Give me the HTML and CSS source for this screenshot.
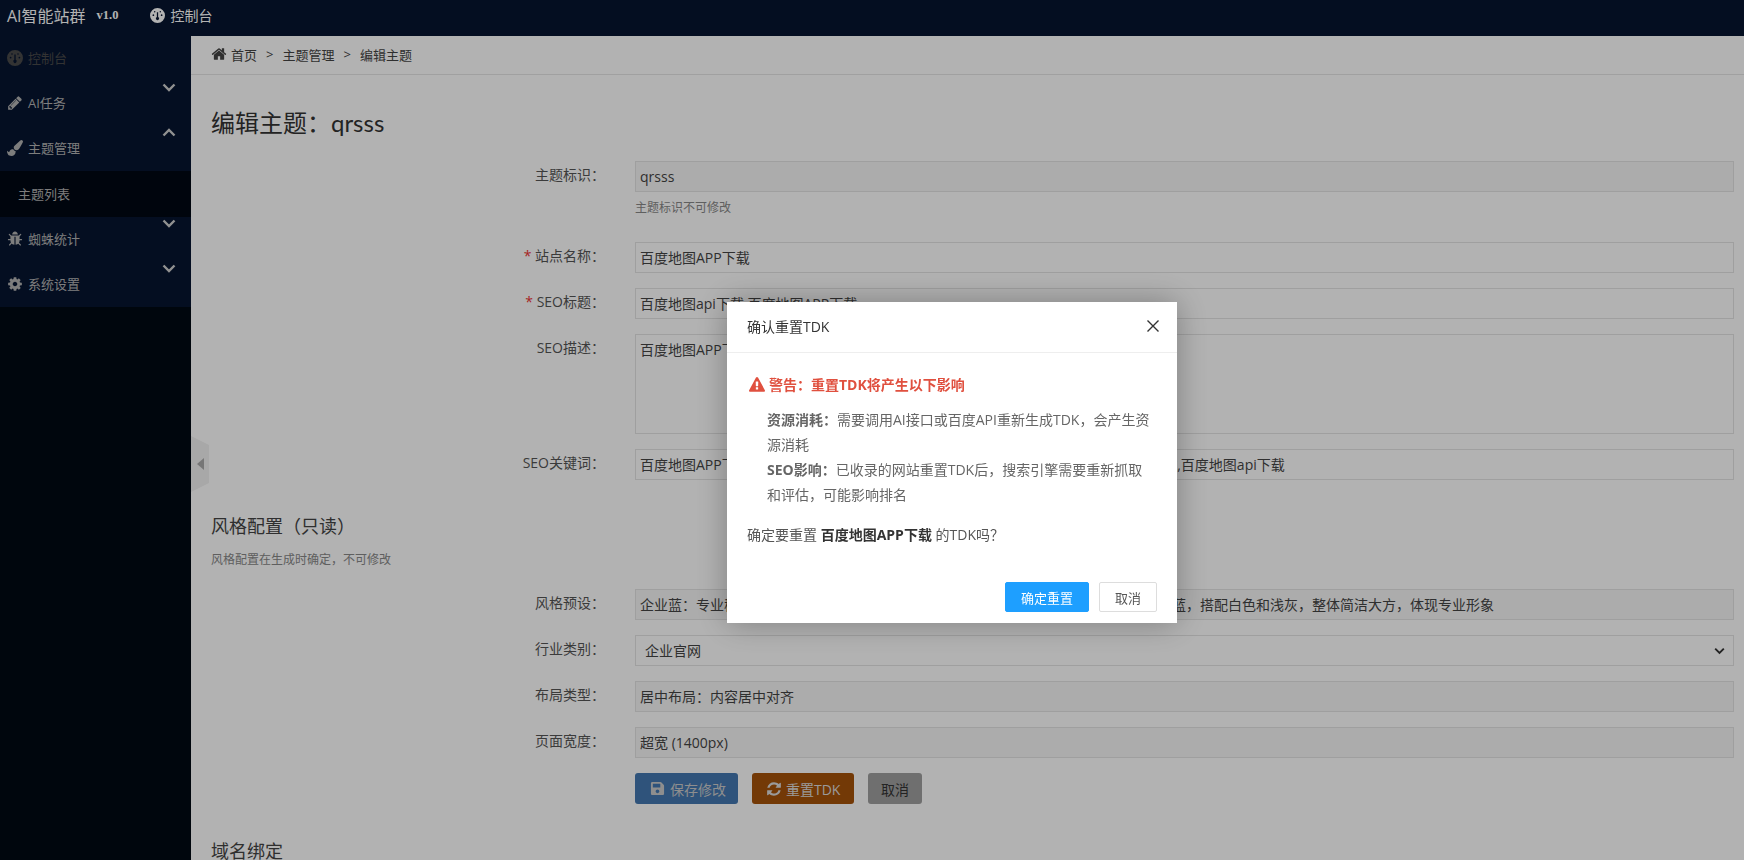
FILE: index.html
```html
<!DOCTYPE html>
<html lang="zh-CN">
<head>
<meta charset="utf-8">
<title>编辑主题</title>
<link rel="stylesheet" href="styles.css">
</head>
<body>
<svg class="sprite" aria-hidden="true">
  <defs>
    <symbol id="i-home" viewBox="0 0 1792 1792"><path d="M1472 992v480q0 26-19 45t-45 19h-384v-384h-256v384h-384q-26 0-45-19t-19-45v-480q0-1 .5-3t.5-3l575-474 575 474q1 2 1 6zm223-69l-62 74q-8 9-21 11h-3q-13 0-21-7l-692-577-692 577q-12 8-24 7-13-2-21-11l-62-74q-8-10-7-23.500t11-21.500l719-599q32-26 76-26t76 26l244 204v-195q0-14 9-23t23-9h192q14 0 23 9t9 23v408l219 182q10 8 11 21.500t-7 23.500z"/></symbol>
    <symbol id="i-pencil" viewBox="0 0 1792 1792"><path d="M491 1536l91-91-235-235-91 91v107h128v128h107zm523-928q0-22-22-22-10 0-17 7l-542 542q-7 7-7 17 0 22 22 22 10 0 17-7l542-542q7-7 7-17zm-54-192l416 416-832 832h-416v-416zm683 96q0 53-37 90l-166 166-416-416 166-165q36-38 90-38 53 0 91 38l235 234q37 39 37 91z"/></symbol>
    <symbol id="i-brush" viewBox="0 0 1792 1792"><path d="M1615 0q70 0 122.500 46.500t52.500 116.500q0 63-45 151-332 629-465 752-97 91-218 91-126 0-216.500-92.500t-90.500-219.500q0-128 92-212l638-579q59-54 130-54zm-909 1034q39 76 106.500 130t150.500 76l1 71q4 213-129.500 347t-348.500 134q-123 0-218-46.500t-152.500-127.500-86.500-183-29-220q7 5 41 30t62 44.500 59 36.500 46 17q41 0 55-37 25-66 57.500-112.500t69.500-76 88-47.500 103-25.500 125-10.500z"/></symbol>
    <symbol id="i-bug" viewBox="0 0 1792 1792"><path d="M1696 960q0 26-19 45t-45 19h-224q0 171-67 290l208 209q19 19 19 45t-19 45q-18 19-45 19t-45-19l-198-197q-5 5-15 13t-42 28.500-65 36.500-82 29-97 13v-896h-128v896q-51 0-101.500-13.500t-87-33-66-39-43.500-32.500l-15-14-183 207q-20 21-48 21-24 0-43-16-19-18-20.500-44.500t15.500-46.500l202-227q-58-114-58-274h-224q-26 0-45-19t-19-45 19-45 45-19h224v-294l-173-173q-19-19-19-45t19-45 45-19 45 19l173 173h844l173-173q19-19 45-19t45 19 19 45-19 45l-173 173v294h224q26 0 45 19t19 45zm-480-576h-640q0-133 93.500-226.500t226.500-93.500 226.500 93.500 93.500 226.500z"/></symbol>
    <symbol id="i-cog" viewBox="0 0 1792 1792"><path d="M1152 896q0-106-75-181t-181-75-181 75-75 181 75 181 181 75 181-75 75-181zm512-109v222q0 12-8 23t-20 13l-185 28q-19 54-39 91 35 50 107 138 10 12 10 25t-9 23q-27 37-99 108t-94 71q-12 0-26-9l-138-108q-44 23-91 38-16 136-29 186-7 28-36 28h-222q-14 0-24.500-8.500t-11.500-21.500l-28-184q-49-16-90-37l-141 107q-10 9-25 9-14 0-25-11-126-114-165-168-7-10-7-23 0-12 8-23 15-21 51-66.500t54-70.500q-27-50-41-99l-183-27q-13-2-21-12.500t-8-23.500v-222q0-12 8-23t19-13l186-28q14-46 39-92-40-57-107-138-10-12-10-24 0-10 9-23 26-36 98.500-107.500t94.500-71.500q13 0 26 10l138 107q44-23 91-38 16-136 29-186 7-28 36-28h222q14 0 24.500 8.500t11.500 21.500l28 184q49 16 90 37l142-107q9-9 24-9 13 0 25 10 129 119 165 170 7 8 7 22 0 12-8 23-15 21-51 66.500t-54 70.500q26 50 41 98l183 28q13 2 21 12.500t8 23.500z"/></symbol>
    <symbol id="i-save" viewBox="0 0 448 512"><path d="M433.941 129.941l-83.882-83.882A48 48 0 0 0 316.118 32H48C21.49 32 0 53.49 0 80v352c0 26.51 21.49 48 48 48h352c26.51 0 48-21.49 48-48V163.882a48 48 0 0 0-14.059-33.941zM224 416c-35.346 0-64-28.654-64-64 0-35.346 28.654-64 64-64s64 28.654 64 64c0 35.346-28.654 64-64 64zm96-304.520V212c0 6.627-5.373 12-12 12H76c-6.627 0-12-5.373-12-12V108c0-6.627 5.373-12 12-12h228.520c3.183 0 6.235 1.264 8.485 3.515l3.480 3.480A11.996 11.996 0 0 1 320 111.480z"/></symbol>
    <symbol id="i-refresh" viewBox="0 0 1792 1792"><path d="M1639 1056q0 5-1 7-64 268-268 434.500t-478 166.500q-146 0-282.500-55t-243.500-157l-129 129q-19 19-45 19t-45-19-19-45v-448q0-26 19-45t45-19h448q26 0 45 19t19 45-19 45l-137 137q71 66 161 102t187 36q134 0 250-65t186-179q11-17 53-117 8-23 30-23h192q13 0 22.500 9.500t9.500 22.500zm25-800v448q0 26-19 45t-45 19h-448q-26 0-45-19t-19-45 19-45l138-138q-148-137-349-137-134 0-250 65t-186 179q-11 17-53 117-8 23-30 23h-199q-13 0-22.500-9.500t-9.500-22.500v-7q65-268 270-434.500t480-166.500q146 0 284 55.500t245 156.500l130-129q19-19 45-19t45 19 19 45z"/></symbol>
    <symbol id="i-warn" viewBox="0 0 1792 1792"><path d="M1024 1375v-190q0-14-9.500-23.500t-22.500-9.500h-192q-13 0-22.500 9.500t-9.500 23.500v190q0 14 9.500 23.500t22.500 9.500h192q13 0 22.500-9.500t9.500-23.500zm-2-374l18-459q0-12-10-19-13-11-24-11h-220q-11 0-24 11-10 7-10 21l17 457q0 10 10 16.500t24 6.500h185q14 0 23.500-6.500t10.500-16.500zm-14-934l768 1408q35 63-2 126-17 29-46.500 46t-63.500 17h-1536q-34 0-63.500-17t-46.500-46q-37-63-2-126l768-1408q17-31 47-49t65-18 65 18 47 49z"/></symbol>
    <symbol id="i-gauge" viewBox="0 0 16 16"><path fill-rule="evenodd" d="M8 0a8 8 0 1 1 0 16A8 8 0 0 1 8 0zM7.300 4.500v5.200a1.700 1.700 0 1 0 1.400 0V4.500zM3.600 6.700a.9.900 0 1 0 0 1.800.9.900 0 0 0 0-1.800zM12.400 6.700a.9.900 0 1 0 0 1.800.9.900 0 0 0 0-1.800zM5 3.200a.8.800 0 1 0 0 1.600.8.800 0 0 0 0-1.600zM11 3.200a.8.800 0 1 0 0 1.600.8.800 0 0 0 0-1.600z"/></symbol>
    <symbol id="i-down" viewBox="0 0 14 9"><path d="M1.500 1.500L7 7l5.500-5.500" fill="none" stroke="currentColor" stroke-width="2.400"/></symbol>
    <symbol id="i-up" viewBox="0 0 14 9"><path d="M1.500 7.500L7 2l5.500 5.500" fill="none" stroke="currentColor" stroke-width="2.400"/></symbol>
  </defs>
</svg>

<header class="topbar">
  <span class="brand">AI智能站群</span>
  <span class="version">v1.0</span>
  <a class="top-link"><svg class="icon icon-top"><use href="#i-gauge"/></svg>控制台</a>
</header>

<div class="shell">
  <nav class="sidebar">
    <ul class="menu">
      <li class="menu-item is-muted"><svg class="icon"><use href="#i-gauge"/></svg>控制台</li>
      <li class="menu-item"><svg class="icon"><use href="#i-pencil"/></svg>AI任务<svg class="caret"><use href="#i-down"/></svg></li>
      <li class="menu-item"><svg class="icon"><use href="#i-brush"/></svg>主题管理<svg class="caret"><use href="#i-up"/></svg></li>
      <li class="menu-sub">主题列表</li>
      <li class="menu-item"><svg class="icon"><use href="#i-bug"/></svg>蜘蛛统计<svg class="caret"><use href="#i-down"/></svg></li>
      <li class="menu-item"><svg class="icon"><use href="#i-cog"/></svg>系统设置<svg class="caret"><use href="#i-down"/></svg></li>
    </ul>
  </nav>

  <main class="main">
    <div class="side-toggle"><span class="side-toggle-arrow"></span></div>
    <div class="crumbs">
      <svg class="icon icon-home"><use href="#i-home"/></svg>
      <span>首页</span><span class="sep">&gt;</span><span>主题管理</span><span class="sep">&gt;</span><span>编辑主题</span>
    </div>

    <div class="content">
      <h1 class="page-title">编辑主题：qrsss</h1>

      <div class="row row-hinted">
        <label class="label">主题标识：</label>
        <div class="control">
          <div class="field field-ro">qrsss</div>
          <div class="help">主题标识不可修改</div>
        </div>
      </div>
      <div class="row">
        <label class="label"><em class="req">*</em> 站点名称：</label>
        <div class="control"><div class="field">百度地图APP下载</div></div>
      </div>
      <div class="row">
        <label class="label"><em class="req">*</em> SEO标题：</label>
        <div class="control"><div class="field">百度地图api下载,百度地图APP下载</div></div>
      </div>
      <div class="row">
        <label class="label">SEO描述：</label>
        <div class="control"><div class="field field-area">百度地图APP下载</div></div>
      </div>
      <div class="row">
        <label class="label">SEO关键词：</label>
        <div class="control"><div class="field">百度地图APP下载,百度地图iPhone,百度地图下载, 百度地图手机下载,百度地图官方下载,百度地图api下载</div></div>
      </div>

      <h2 class="section-title">风格配置（只读）</h2>
      <p class="section-note">风格配置在生成时确定，不可修改</p>

      <div class="row">
        <label class="label">风格预设：</label>
        <div class="control"><div class="field field-ro">企业蓝：专业稳重的企业风格，适合企业官网与商务类站点使用，采用商务主色调为深蓝，搭配白色和浅灰，整体简洁大方，体现专业形象</div></div>
      </div>
      <div class="row">
        <label class="label">行业类别：</label>
        <div class="control"><div class="field field-select">企业官网<svg class="select-caret"><use href="#i-down"/></svg></div></div>
      </div>
      <div class="row">
        <label class="label">布局类型：</label>
        <div class="control"><div class="field field-ro">居中布局：内容居中对齐</div></div>
      </div>
      <div class="row">
        <label class="label">页面宽度：</label>
        <div class="control"><div class="field field-ro">超宽 (1400px)</div></div>
      </div>

      <div class="actions">
        <button class="btn btn-blue"><svg class="icon"><use href="#i-save"/></svg>保存修改</button>
        <button class="btn btn-orange"><svg class="icon icon-refresh"><use href="#i-refresh"/></svg>重置TDK</button>
        <button class="btn btn-grey">取消</button>
      </div>

      <h2 class="section-title section-domain">域名绑定</h2>
    </div>
  </main>
</div>

<div class="overlay"></div>
<section class="modal">
  <header class="modal-head">
    <span>确认重置TDK</span>
    <svg class="modal-close" viewBox="0 0 14 14"><path d="M1.500 1.500l11 11M12.500 1.500l-11 11" stroke="currentColor" stroke-width="1.400" fill="none"/></svg>
  </header>
  <div class="modal-body">
    <p class="warn"><svg class="icon icon-warn"><use href="#i-warn"/></svg>警告：重置TDK将产生以下影响</p>
    <div class="impact">
      <p><strong>资源消耗：</strong>需要调用AI接口或百度API重新生成TDK，会产生资源消耗</p>
      <p><strong>SEO影响：</strong>已收录的网站重置TDK后，搜索引擎需要重新抓取和评估，可能影响排名</p>
    </div>
    <p class="confirm">确定要重置 <strong>百度地图APP下载</strong> 的TDK吗？</p>
  </div>
  <footer class="modal-foot">
    <button class="mbtn mbtn-primary">确定重置</button>
    <button class="mbtn">取消</button>
  </footer>
</section>
</body>
</html>
```

FILE: styles.css
```css
* { box-sizing: border-box; }
html, body { height: 100%; }
body {
  margin: 0;
  height: 860px;
  overflow: hidden;
  background: #fff;
  color: #333;
  font-family: "Open Sans", "Noto Sans CJK SC", sans-serif;
  font-size: 13px;
}
ul { list-style: none; margin: 0; padding: 0; }
p, h1, h2 { margin: 0; font-weight: 400; }
.sprite { position: absolute; width: 0; height: 0; }
.icon { width: 16px; height: 16px; fill: currentColor; flex: none; }

.topbar {
  height: 36px;
  background: #071530;
  color: #fff;
  display: flex;
  align-items: center;
  padding: 0 0 6px 7px;
}
.brand { font-size: 16px; }
.version { font-size: 12.500px; font-weight: 700; margin-left: 11px; font-family: "Liberation Serif", serif; }
.top-link { display: flex; align-items: center; margin-left: 32px; font-size: 14px; }
.icon-top { width: 15px; height: 15px; margin-right: 5px; }

.shell { display: flex; height: 824px; }
.sidebar { width: 191px; flex: none; background: #010914; color: #b4b4b4; }
.menu { background: #071530; }
.menu-item {
  position: relative;
  height: 45px;
  display: flex;
  align-items: center;
  padding: 0 0 2px 7px;
  gap: 5px;
}
.menu-item.is-muted { color: #4a4a4a; }
.caret {
  position: absolute;
  right: 15px;
  top: 2px;
  width: 14px;
  height: 9px;
  color: #d0d0d0;
}
.menu-sub {
  height: 46px;
  line-height: 46px;
  padding-left: 18px;
  background: #010813;
}

.main { position: relative; flex: 1; min-width: 0; overflow: hidden; }
.side-toggle {
  position: absolute;
  left: 0;
  top: 400px;
  width: 18px;
  height: 56px;
  background: #f1f1f1;
  clip-path: polygon(0 0, 100% 16%, 100% 84%, 0 100%);
  display: flex;
  align-items: center;
  padding-left: 6px;
}
.side-toggle-arrow {
  width: 0;
  height: 0;
  border: 6px solid transparent;
  border-left-width: 0;
  border-right: 7px solid #aaa;
}
.crumbs {
  height: 39px;
  border-bottom: 1px solid #e6e6e6;
  display: flex;
  align-items: center;
  padding: 0 0 2px 20px;
  color: #444;
}
.icon-home { margin-right: 4px; }
.sep { margin: 0 9px; }

.content { padding: 0 10px 0 20px; }
.page-title {
  font-family: Lato, "Noto Sans CJK SC", sans-serif;
  font-size: 24px;
  line-height: 32px;
  margin-top: 32px;
  margin-bottom: 22px;
  color: #333;
}

.row { display: flex; margin-bottom: 15px; }
.row-hinted { margin-bottom: 24px; }
.label {
  width: 394px;
  flex: none;
  margin-right: 30px;
  text-align: right;
  font-size: 14px;
  line-height: 27px;
  color: #555;
}
.req { color: #e33; font-style: normal; }
.control { flex: 1; min-width: 0; }
.field {
  height: 31px;
  line-height: 30px;
  padding: 0 4px;
  border: 1px solid #e4e4e4;
  background: #fff;
  color: #444;
  font-size: 14px;
  white-space: nowrap;
  overflow: hidden;
}
.field-ro { background: #f7f7f7; }
.field-area { height: 100px; }
.field-select { position: relative; padding-left: 9px; }
.select-caret { position: absolute; right: 8px; top: 11px; width: 11px; height: 8px; color: #333; }
.help { font-size: 12px; line-height: 20px; margin-top: 6px; color: #888; }

.section-title { font-size: 18px; line-height: 26px; margin-top: 33px; color: #444; }
.section-note { font-size: 12px; line-height: 20px; margin: 11px 0 19px; color: #888; }
.section-domain { margin-top: 34px; }

.actions { display: flex; gap: 14px; margin-left: 424px; }
.btn {
  height: 31px;
  border: 0;
  border-radius: 3px;
  padding: 0;
  display: flex;
  align-items: center;
  font: inherit;
  font-size: 14px;
  color: #fff;
  white-space: nowrap;
}
.btn .icon { width: 15px; height: 15px; margin-right: 5px; }
.btn .icon-refresh { width: 16px; height: 16px; margin-right: 4px; }
.btn-blue { width: 103px; padding-left: 15px; background: #4478b0; color: #ccc; }
.btn-orange { width: 102px; padding-left: 14px; background: #a5520a; color: #ddd; }
.btn-grey { width: 54px; background: #a0a0a0; color: #333; justify-content: center; }

.overlay { position: fixed; inset: 0; z-index: 10; background: rgba(0, 0, 0, .3); }
.modal {
  position: fixed;
  z-index: 11;
  left: 727px;
  top: 302px;
  width: 450px;
  height: 321px;
  background: #fff;
  box-shadow: 0 0 30px rgba(0, 0, 0, .3);
  color: #666;
  font-size: 14px;
}
.modal-head {
  height: 51px;
  padding: 0 20px 2px;
  border-bottom: 1px solid #eee;
  display: flex;
  align-items: center;
  justify-content: space-between;
  color: #333;
}
.modal-close { width: 14px; height: 14px; color: #333; margin-right: -3px; }
.modal-body { padding: 19px 20px 0; }
.warn { display: flex; align-items: center; gap: 4px; color: #e0503f; font-weight: 700; line-height: 25px; margin-left: 2px; }
.icon-warn { width: 16px; height: 16px; }
.impact { margin: 10px 5px 0 20px; line-height: 25px; }
.impact strong { color: #666; }
.confirm { margin-top: 15px; line-height: 25px; color: #555; }
.confirm strong { color: #333; }
.modal-foot { position: absolute; right: 20px; bottom: 11px; display: flex; gap: 10px; font-size: 13px; }
.mbtn {
  width: 58px;
  height: 30px;
  border: 1px solid #ddd;
  border-radius: 2px;
  background: #fff;
  color: #555;
  font: inherit;
  padding: 0;
}
.mbtn-primary { width: 84px; border-color: #1e9fff; background: #1e9fff; color: #fff; }
```
